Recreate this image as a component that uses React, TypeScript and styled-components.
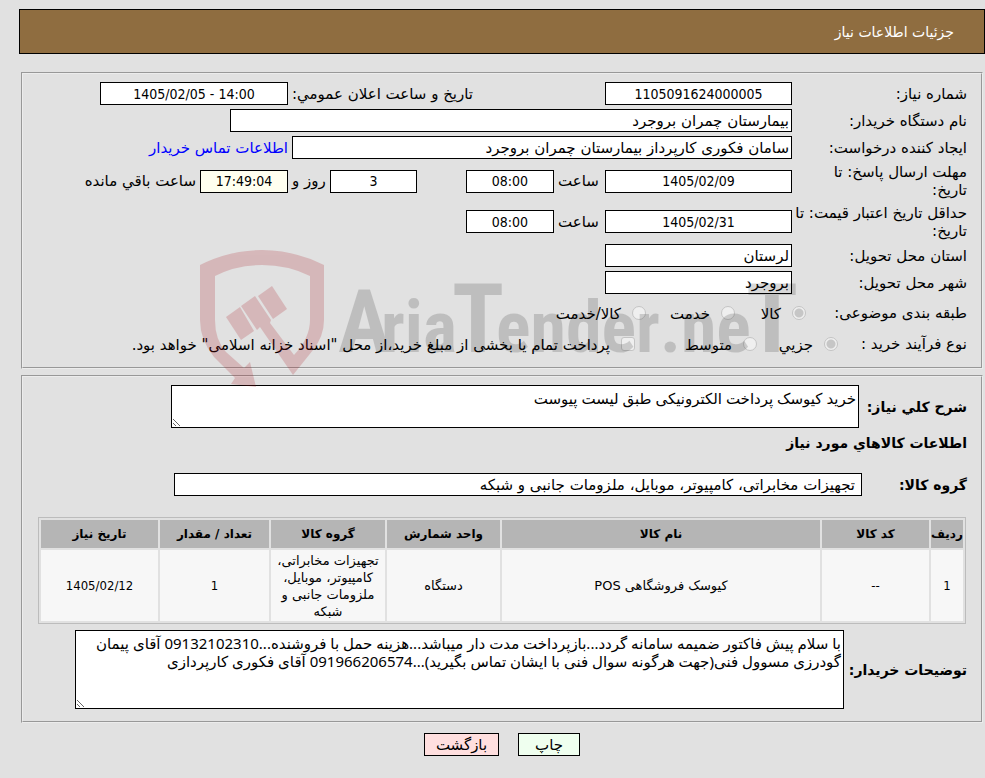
import React from "react";
import styled, { createGlobalStyle } from "styled-components";

const numerals = `"DejaVu Sans Condensed", "DejaVu Sans", sans-serif`;

const GlobalStyle = createGlobalStyle`
  * { box-sizing: border-box; }
  body {
    margin: 0;
    background: #e1e1e1;
    color: #000;
    font: 15px/18px "DejaVu Sans", sans-serif;
  }
  input, textarea, button { font: inherit; color: inherit; margin: 0; }
`;

const Page = styled.main`
  position: relative;
  min-height: 778px;
  padding: 9px 0 22px 19px;
`;

const TitleBar = styled.header`
  display: flex;
  align-items: center;
  height: 45px;
  padding: 0 30px;
  background: #8f6d40;
  border: 1px solid #000;
  color: #fff;
  h1 { margin: 0; font-size: 14px; font-weight: 400; }
`;

const Panel = styled.section<{ $top: number }>`
  display: flex;
  flex-direction: column;
  gap: 4px;
  margin: ${(p) => p.$top}px 2px 0;
  padding: 8px 14px 12px;
  border: 2px groove #ececec;
`;

const Row = styled.div<{ $h?: number }>`
  display: flex;
  align-items: center;
  min-height: ${(p) => p.$h ?? 23}px;
  white-space: nowrap;
`;

const Caption = styled.label<{ $w?: number; $bold?: boolean }>`
  flex: 0 0 ${(p) => p.$w ?? 175}px;
  white-space: pre;
  font-size: ${(p) => (p.$bold ? 14 : 15)}px;
  font-weight: ${(p) => (p.$bold ? 700 : 400)};
`;

const Between = styled.label<{ $w: number }>`
  flex: 0 0 ${(p) => p.$w}px;
  padding: 0 4px;
  text-align: end;
`;

const After = styled.span`
  padding: 0 4px;
`;

const Gap = styled.span`
  flex: 0 0 49px;
`;

const Field = styled.input<{ $w: number; $center?: boolean; $tint?: string; $pad?: number }>`
  flex: 0 1 ${(p) => p.$w}px;
  min-width: 0;
  width: ${(p) => p.$w}px;
  height: 23px;
  padding: 0 ${(p) => p.$pad ?? 2}px;
  background: ${(p) => p.$tint ?? "#fff"};
  border: 1px solid #000;
  border-radius: 0;
  text-align: ${(p) => (p.$center ? "center" : "start")};
  ${(p) => p.$center && `font-family: ${numerals}; font-size: 14px;`}
`;

const ContactLink = styled.a`
  padding: 0 4px;
  color: #00f;
  text-decoration: none;
`;

const Choice = styled.label<{ $w?: number }>`
  display: flex;
  flex: 0 0 ${(p) => (p.$w ? p.$w + "px" : "auto")};
  align-items: center;
  gap: 11px;
  span { padding-top: 2px; }
`;

const Mark = styled.input`
  appearance: none;
  flex: 0 0 14px;
  height: 14px;
  background: #efefef;
  border: 1px solid #c4c4c4;
  border-radius: ${(p) => (p.type === "radio" ? "50%" : "3px")};
  &:checked {
    background: radial-gradient(circle, #c6c6c6 0 4px, #efefef 5px);
  }
`;

const Memo = styled.textarea<{ $w: number; $h: number }>`
  flex: 0 1 ${(p) => p.$w}px;
  min-width: 0;
  height: ${(p) => p.$h}px;
  padding: 3px 2px;
  background: #fff;
  border: 1px solid #000;
  border-radius: 0;
  font-family: "Noto Sans", "DejaVu Sans", sans-serif;
`;

const SubHeading = styled.h2`
  margin: 0 0 15px;
  font-size: 14px;
  line-height: 22px;
`;

const Goods = styled.table`
  width: calc(100% - 15px);
  margin: 17px 1px 2px 0;
  table-layout: fixed;
  border: 1px solid #bcbcbc;
  border-collapse: separate;
  border-spacing: 2px;
  font-size: 13px;
  line-height: 17px;
  text-align: center;
  th { height: 28px; padding: 0; background: #b5b5b5; font-size: 12px; white-space: nowrap; }
  td { height: 71px; padding: 1px 4px; background: #f7f7f7; }
`;

const Cell = styled.td<{ $numeric?: boolean }>`
  ${(p) => p.$numeric && `font-family: ${numerals};`}
`;

const Actions = styled.div`
  display: flex;
  justify-content: center;
  gap: 19px;
  margin-top: 10px;
`;

const ActionButton = styled.button<{ $w: number; $tint: string }>`
  width: ${(p) => p.$w}px;
  height: 23px;
  padding: 0;
  background: ${(p) => p.$tint};
  border: 1px solid #000;
`;

const Watermark = styled.svg`
  position: absolute;
  top: 240px;
  left: 190px;
  pointer-events: none;
`;

const columns = [
  { title: "ردیف", width: 32, value: "1" },
  { title: "کد کالا", width: 107, value: "--" },
  { title: "نام کالا", width: 318, value: "کیوسک فروشگاهی POS" },
  { title: "واحد شمارش", width: 113, value: "دستگاه" },
  { title: "گروه کالا", width: 114, value: "تجهیزات مخابراتی، کامپیوتر، موبایل، ملزومات جانبی و شبکه" },
  { title: "تعداد / مقدار", width: 109, value: "1" },
  { title: "تاریخ نیاز", width: 117, value: "1405/02/12" },
];

type EntryProps = {
  id: string;
  label: string;
  value: string;
  width: number;
  center?: boolean;
  height?: number;
  children?: React.ReactNode;
};

function Entry({ id, label, value, width, center, height, children }: EntryProps) {
  return (
    <Row $h={height}>
      <Caption htmlFor={id}>{label}</Caption>
      <Field id={id} $w={width} $center={center} dir={center ? "ltr" : "rtl"} defaultValue={value} readOnly />
      {children}
    </Row>
  );
}

function Brand() {
  return (
    <Watermark width="620" height="150" viewBox="0 0 620 150" direction="ltr" aria-hidden="true">
      <g fill="#aa141e" opacity="0.2">
        <path d="M10 25Q40 10 72 10Q104 10 134 25V80Q134 96 123 110L103 135L70 87L67 90L51 66L65 56L81 80L80 83L104 115Q120 98 120 80V36Q98 25 72 25Q46 25 25 36V80Q25 100 36 112L54 128L60 122L66 147L41 144L45 138L24 117Q10 100 10 80Z" />
        <path d="M36 77L50 67L64 91L51 100Z" />
        <path d="M68 56L82 46L97 69L83 79Z" />
      </g>
      <text y="112" fill="#000" opacity="0.15" fontFamily="'Roboto Condensed', 'DejaVu Sans Condensed', sans-serif" fontWeight="700" fontSize="72">
        <tspan x="148" fontSize="88">A</tspan>
        <tspan x="191">ria</tspan>
        <tspan x="262" fontSize="96">T</tspan>
        <tspan x="306">ender</tspan>
        <tspan x="470">.ne</tspan>
        <tspan x="556" fontSize="96">T</tspan>
      </text>
    </Watermark>
  );
}

export default function App() {
  return (
    <Page dir="rtl" lang="fa">
      <GlobalStyle />
      <TitleBar>
        <h1>جزئیات اطلاعات نیاز</h1>
      </TitleBar>

      <Panel $top={18}>
        <Entry id="number" label="شماره نیاز:" value="1105091624000005" width={187} center>
          <Between htmlFor="announced" $w={317}>تاریخ و ساعت اعلان عمومي:</Between>
          <Field id="announced" $w={188} $center dir="ltr" defaultValue="1405/02/05 - 14:00" readOnly />
        </Entry>
        <Entry id="agency" label="نام دستگاه خریدار:" value="بیمارستان چمران بروجرد" width={562} />
        <Entry id="creator" label="ایجاد کننده درخواست:" value="سامان فکوری کارپرداز بیمارستان چمران بروجرد" width={500}>
          <ContactLink href="#contact">اطلاعات تماس خریدار</ContactLink>
        </Entry>
        <Entry id="deadline" label={"مهلت ارسال پاسخ: تا\nتاریخ:"} value="1405/02/09" width={187} center height={36}>
          <Between htmlFor="deadlineTime" $w={51}>ساعت</Between>
          <Field id="deadlineTime" $w={88} $center defaultValue="08:00" readOnly />
          <Gap />
          <Field id="days" $w={87} $center defaultValue="3" readOnly />
          <Between htmlFor="days" $w={42}>روز و</Between>
          <Field id="left" $w={88} $center $tint="#ffffef" defaultValue="17:49:04" aria-label="ساعت باقي مانده" readOnly />
          <After>ساعت باقي مانده</After>
        </Entry>
        <Entry id="validity" label={"حداقل تاریخ اعتبار قیمت: تا\nتاریخ:"} value="1405/02/31" width={187} center height={37}>
          <Between htmlFor="validityTime" $w={51}>ساعت</Between>
          <Field id="validityTime" $w={88} $center defaultValue="08:00" readOnly />
        </Entry>
        <Entry id="province" label="استان محل تحویل:" value="لرستان" width={187} />
        <Entry id="city" label="شهر محل تحویل:" value="بروجرد" width={187} />
        <Row $h={30}>
          <Caption as="span" $w={161}>طبقه بندی موضوعی:</Caption>
          <Choice $w={71}><Mark type="radio" name="subject" defaultChecked disabled /><span>کالا</span></Choice>
          <Choice $w={89}><Mark type="radio" name="subject" disabled /><span>خدمت</span></Choice>
          <Choice><Mark type="radio" name="subject" disabled /><span>کالا/خدمت</span></Choice>
        </Row>
        <Row>
          <Caption as="span" $w={129}>نوع فرآیند خرید :</Caption>
          <Choice $w={81}><Mark type="radio" name="process" defaultChecked disabled /><span>جزیي</span></Choice>
          <Choice $w={122}><Mark type="radio" name="process" disabled /><span>متوسط</span></Choice>
          <Choice><Mark type="checkbox" disabled /><span>پرداخت تمام یا بخشی از مبلغ خرید،از محل "اسناد خزانه اسلامی" خواهد بود.</span></Choice>
        </Row>
      </Panel>

      <Panel $top={6}>
        <Row>
          <Caption htmlFor="summary" $w={108} $bold>شرح کلي نیاز:</Caption>
          <Memo id="summary" $w={688} $h={43} defaultValue="خرید کیوسک پرداخت الکترونیکی طبق لیست پیوست" readOnly />
        </Row>
        <SubHeading>اطلاعات کالاهاي مورد نیاز</SubHeading>
        <Row>
          <Caption htmlFor="group" $w={105} $bold>گروه کالا:</Caption>
          <Field id="group" $w={688} $pad={6} defaultValue="تجهیزات مخابراتی، کامپیوتر، موبایل، ملزومات جانبی و شبکه" readOnly />
        </Row>
        <Goods>
          <colgroup>
            {columns.map((c) => <col key={c.title} width={c.width} />)}
          </colgroup>
          <thead>
            <tr>{columns.map((c) => <th key={c.title} scope="col">{c.title}</th>)}</tr>
          </thead>
          <tbody>
            <tr>{columns.map((c) => <Cell key={c.title} $numeric={/^[\d/-]+$/.test(c.value)}>{c.value}</Cell>)}</tr>
          </tbody>
        </Goods>
        <Row>
          <Caption htmlFor="notes" $w={123} $bold>توضیحات خریدار:</Caption>
          <Memo
            id="notes"
            $w={769}
            $h={79}
            defaultValue={"با سلام پیش فاکتور ضمیمه سامانه گردد...بازپرداخت مدت دار میباشد...هزینه حمل با فروشنده...09132102310 آقای پیمان گودرزی مسوول فنی(جهت هرگونه سوال فنی با ایشان تماس بگیرید)...091966206574 آقای فکوری کارپردازی"}
            readOnly
          />
        </Row>
      </Panel>

      <Actions>
        <ActionButton type="button" $w={62} $tint="#efffef">چاپ</ActionButton>
        <ActionButton type="button" $w={75} $tint="#ffdfdf">بازگشت</ActionButton>
      </Actions>
      <Brand />
    </Page>
  );
}
